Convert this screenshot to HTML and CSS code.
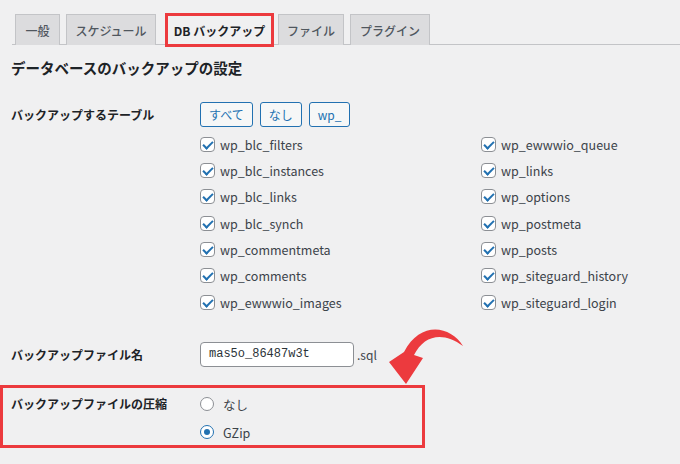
FILE: index.html
```html
<!DOCTYPE html>
<html lang="ja">
<head>
<meta charset="utf-8">
<title>DB バックアップ</title>
<link rel="stylesheet" href="styles.css">
</head>
<body>
<div class="page">
  <nav class="tabs">
    <a class="tab">一般</a>
    <a class="tab">スケジュール</a>
    <a class="tab active">DB バックアップ</a>
    <a class="tab">ファイル</a>
    <a class="tab">プラグイン</a>
  </nav>

  <h2 class="title">データベースのバックアップの設定</h2>

  <div class="row row-tables">
    <div class="label">バックアップするテーブル</div>
    <div class="field">
      <div class="btns">
        <button class="btn">すべて</button>
        <button class="btn">なし</button>
        <button class="btn">wp_</button>
      </div>
      <ul class="tables">
        <li><span class="cb"></span>wp_blc_filters</li>
        <li><span class="cb"></span>wp_blc_instances</li>
        <li><span class="cb"></span>wp_blc_links</li>
        <li><span class="cb"></span>wp_blc_synch</li>
        <li><span class="cb"></span>wp_commentmeta</li>
        <li><span class="cb"></span>wp_comments</li>
        <li><span class="cb"></span>wp_ewwwio_images</li>
        <li><span class="cb"></span>wp_ewwwio_queue</li>
        <li><span class="cb"></span>wp_links</li>
        <li><span class="cb"></span>wp_options</li>
        <li><span class="cb"></span>wp_postmeta</li>
        <li><span class="cb"></span>wp_posts</li>
        <li><span class="cb"></span>wp_siteguard_history</li>
        <li><span class="cb"></span>wp_siteguard_login</li>
      </ul>
    </div>
  </div>

  <div class="row row-file">
    <div class="label">バックアップファイル名</div>
    <div class="field field-inline">
      <span class="input">mas5o_86487w3t</span><span class="ext">.sql</span>
    </div>
  </div>

  <div class="row row-compress">
    <div class="label">バックアップファイルの圧縮</div>
    <div class="field radios">
      <label class="radio-row"><span class="rb"></span>なし</label>
      <label class="radio-row"><span class="rb checked"></span>GZip</label>
    </div>
  </div>

  <svg class="arrow" width="680" height="464" viewBox="0 0 680 464" aria-hidden="true">
    <path d="M463 346 C450 325 420 321 404 352 L389 362 L406 384 L423 358 L414 355 C424 335 443 331 463 346 Z" fill="#ec3a3e"/>
  </svg>
</div>
</body>
</html>
```

FILE: styles.css
```css
* { box-sizing: border-box; }

html, body {
  margin: 0;
  padding: 0;
  background: #f0f0f1;
}

body {
  font-family: "Noto Sans CJK JP", "Noto Sans", sans-serif;
  font-size: 12px;
  color: #3c434a;
}

.page {
  position: relative;
  width: 680px;
  height: 464px;
  overflow: hidden;
}

/* Tabs */
.tabs {
  display: flex;
  align-items: flex-end;
  gap: 6px;
  margin: 13px 0 0 12px;
  padding-left: 3px;
  height: 32px;
  border-bottom: 1px solid #c3c4c7;
}

.tab {
  display: flex;
  align-items: center;
  justify-content: center;
  height: 31px;
  margin-bottom: -1px;
  padding: 0;
  white-space: nowrap;
  background: #dcdcde;
  border: 1px solid #c3c4c7;
  border-bottom: 0;
  color: #50575e;
  font-weight: 500;
  font-size: 12px;
}

.tab:nth-child(1) { width: 45px; }
.tab:nth-child(2) { width: 90px; }
.tab:nth-child(4) { width: 66px; }
.tab:nth-child(5) { width: 80px; }

.tab.active {
  width: 109px;
  height: 34px;
  margin-bottom: -3px;
  margin-left: 3px;
  margin-right: -2px;
  background: #f0f0f1;
  border: 3px solid #ec3a3e;
  color: #1d2327;
  font-weight: 700;
}

/* Heading */
.title {
  margin: 13px 0 24px 11px;
  font-size: 14.5px;
  line-height: 20px;
  font-weight: 700;
  color: #1d2327;
}

/* Rows */
.row {
  display: flex;
  margin-left: 11px;
}

.label {
  width: 189px;
  flex: none;
  font-weight: 700;
  color: #1d2327;
  font-size: 12px;
  line-height: 25px;
}

.field { flex: 1; }

.btns {
  display: flex;
  gap: 7px;
}

.btn {
  height: 25px;
  padding: 0 8px;
  border: 1px solid #2271b1;
  border-radius: 3px;
  background: #f6f7f7;
  color: #2271b1;
  font-family: inherit;
  font-size: 12px;
  line-height: 23px;
}

.tables {
  list-style: none;
  margin: 4px 0 0;
  padding: 0;
  display: grid;
  grid-template-columns: 281px 1fr;
  grid-template-rows: repeat(7, 26.33px);
  grid-auto-flow: column;
}

.tables li {
  display: flex;
  align-items: center;
  gap: 5px;
  font-size: 12.5px;
  color: #3c434a;
}

.cb {
  position: relative;
  width: 15px;
  height: 15px;
  flex: none;
  background: #fff;
  border: 1px solid #8c8f94;
  border-radius: 4px;
}

.cb::after {
  content: "";
  position: absolute;
  left: 4px;
  top: 1px;
  width: 4px;
  height: 8px;
  border-right: 2px solid #2271b1;
  border-bottom: 2px solid #2271b1;
  transform: rotate(45deg);
}

.row-file { margin-top: 27px; }

.field-inline {
  display: flex;
  align-items: center;
}

.input {
  width: 154px;
  height: 25px;
  padding: 0 8px;
  background: #fff;
  border: 1px solid #8c8f94;
  border-radius: 4px;
  font-family: "Liberation Mono", "DejaVu Sans Mono", monospace;
  font-size: 12px;
  line-height: 23px;
  color: #2c3338;
}

.ext {
  margin-left: 3px;
  color: #3c434a;
}

/* Highlighted compression row */
.row-compress {
  margin: 18px 0 0 0;
  width: 425px;
  border: 3px solid #ec3a3e;
  padding: 3px 0 0 8px;
}

.row-compress .label { line-height: 26px; }

.radios {
  display: grid;
  grid-auto-rows: 26px;
  row-gap: 2px;
}

.radio-row {
  display: flex;
  align-items: center;
  gap: 9px;
  font-size: 12.5px;
  color: #3c434a;
}

.rb {
  position: relative;
  width: 14px;
  height: 14px;
  flex: none;
  border-radius: 50%;
  border: 1px solid #8c8f94;
  background: #fff;
}

.rb.checked { border-color: #2271b1; }

.rb.checked::after {
  content: "";
  position: absolute;
  left: 3px;
  top: 3px;
  width: 6px;
  height: 6px;
  border-radius: 50%;
  background: #2271b1;
}

.arrow {
  position: absolute;
  left: 0;
  top: 0;
  pointer-events: none;
}
```
